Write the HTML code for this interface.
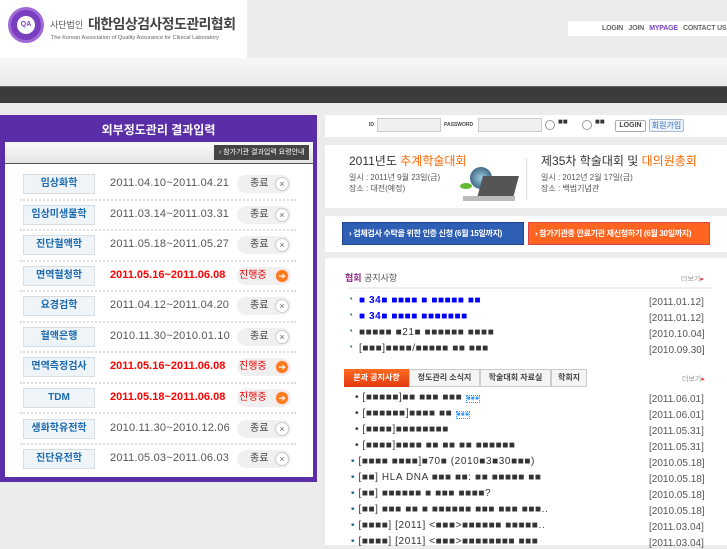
<!DOCTYPE html>
<html><head><meta charset="utf-8"><style>
*{margin:0;padding:0;box-sizing:border-box}
body{width:727px;height:545px;overflow:hidden;background:#ececec;font-family:"Liberation Sans","Noto Sans CJK KR",sans-serif;position:relative;font-size:11px;color:#444}
.abs{position:absolute;white-space:nowrap}
.hdr{left:0;top:0;width:247px;height:58px;background:#fff}
.band{left:0;top:58px;width:727px;height:28px;background:linear-gradient(#f7f7f5,#eaeaea)}
.dark{left:0;top:86px;width:727px;height:17px;background:#3b3b3b;border-top:1px solid #666}
.topnav{left:568px;top:21px;width:159px;height:15px;background:#fff;font-size:7px;font-weight:bold;color:#666;line-height:15px;padding-left:34px;letter-spacing:-.2px}
.panel{left:0;top:115px;width:317px;height:367px;background:#5a2ea6}
.inner{left:5px;top:142px;width:308px;height:335px;background:#fff}
.gbar{left:5px;top:142px;width:308px;height:22px;background:linear-gradient(#fafafa,#e4e4e4);border-bottom:1px solid #555}
.row{left:23px;width:270px;height:22px}
.lab{position:absolute;left:0;top:0;width:72px;height:20px;background:#eef4f8;border:1px solid #d8dde2;color:#1a68b0;font-weight:bold;font-size:10px;text-align:center;line-height:18px}
.dt{position:absolute;left:87px;top:3px;font-size:11px;color:#555;letter-spacing:.2px}
.dt.r{color:#f00;font-weight:bold;letter-spacing:0}
.st{position:absolute;left:214px;top:1px;width:54px;height:18px;border-radius:9px;background:#f0f0f0;font-size:10px;color:#444;line-height:18px;padding-left:13px}
.st i{position:absolute;right:2px;top:2px;width:14px;height:14px;border-radius:7px;background:#fff;border:1px solid #ccc;font-style:normal;font-size:9px;line-height:12px;text-align:center;color:#666}
.st.r{color:#e00;padding-left:2px}
.st.r i{background:#ff7a1a;border-color:#fdd;color:#fff}
.dots{left:20px;width:276px;height:0;border-top:2px dotted #ddd}
.box{background:#fff;left:325px;width:402px}
.n{position:absolute;left:28px;font-size:10px;white-space:nowrap;letter-spacing:.6px}
.d{position:absolute;left:324px;font-size:10px;color:#555}
</style></head><body>
<div class="abs hdr">
 <div class="abs" style="left:8px;top:7px;width:36px;height:36px;border-radius:50%;background:#7a3fbf;border:3px solid #9d6ad6"></div>
 <div class="abs" style="left:17px;top:16px;width:18px;height:18px;border-radius:50%;background:#fff;color:#7a3fbf;font-size:7px;font-weight:bold;text-align:center;line-height:18px">QA</div>
 <div class="abs" style="left:50px;top:18px;font-size:9px;color:#555">사단법인</div>
 <div class="abs" style="left:88px;top:14px;font-size:14px;font-weight:bold;color:#444;letter-spacing:-.6px">대한임상검사정도관리협회</div>
 <div class="abs" style="left:51px;top:35px;font-size:5.6px;color:#666">The Korean Association of Quality Assurance for Clinical Laboratory</div>
</div>
<div class="abs topnav">LOGIN &nbsp; JOIN &nbsp; <span style="color:#7a45c0">MYPAGE</span> &nbsp; CONTACT US</div>
<div class="abs band"></div><div class="abs dark"></div>

<div class="abs panel"></div>
<div class="abs" style="left:0;top:121px;width:317px;text-align:center;color:#fff;font-weight:bold;font-size:12px">외부정도관리 결과입력</div>
<div class="abs inner"></div>
<div class="abs gbar"></div>
<div class="abs" style="left:214px;top:145px;width:95px;height:15px;background:#444;color:#fff;font-size:7px;line-height:15px;padding-left:5px;overflow:hidden">› 참가기관 결과입력 요령안내</div>

<div class="abs row" style="top:174px"><div class="lab">임상화학</div><div class="dt">2011.04.10~2011.04.21</div><div class="st">종료<i>×</i></div></div>
<div class="abs dots" style="top:199px"></div>
<div class="abs row" style="top:205px"><div class="lab">임상미생물학</div><div class="dt">2011.03.14~2011.03.31</div><div class="st">종료<i>×</i></div></div>
<div class="abs dots" style="top:229px"></div>
<div class="abs row" style="top:235px"><div class="lab">진단혈액학</div><div class="dt">2011.05.18~2011.05.27</div><div class="st">종료<i>×</i></div></div>
<div class="abs dots" style="top:260px"></div>
<div class="abs row" style="top:266px"><div class="lab">면역혈청학</div><div class="dt r">2011.05.16~2011.06.08</div><div class="st r">진행중<i>➔</i></div></div>
<div class="abs dots" style="top:290px"></div>
<div class="abs row" style="top:296px"><div class="lab">요경검학</div><div class="dt">2011.04.12~2011.04.20</div><div class="st">종료<i>×</i></div></div>
<div class="abs dots" style="top:321px"></div>
<div class="abs row" style="top:327px"><div class="lab">혈액은행</div><div class="dt">2010.11.30~2010.01.10</div><div class="st">종료<i>×</i></div></div>
<div class="abs dots" style="top:351px"></div>
<div class="abs row" style="top:357px"><div class="lab">면역측정검사</div><div class="dt r">2011.05.16~2011.06.08</div><div class="st r">진행중<i>➔</i></div></div>
<div class="abs dots" style="top:382px"></div>
<div class="abs row" style="top:388px"><div class="lab">TDM</div><div class="dt r">2011.05.18~2011.06.08</div><div class="st r">진행중<i>➔</i></div></div>
<div class="abs dots" style="top:412px"></div>
<div class="abs row" style="top:419px"><div class="lab">생화학유전학</div><div class="dt">2010.11.30~2010.12.06</div><div class="st">종료<i>×</i></div></div>
<div class="abs dots" style="top:443px"></div>
<div class="abs row" style="top:449px"><div class="lab">진단유전학</div><div class="dt">2011.05.03~2011.06.03</div><div class="st">종료<i>×</i></div></div>

<div class="abs box" style="top:115px;height:22px"></div>
<div class="abs" style="left:369px;top:122px;font-size:5px;font-weight:bold">ID</div>
<div class="abs" style="left:377px;top:118px;width:64px;height:14px;background:#f0f0f0;border:1px solid #ccc"></div>
<div class="abs" style="left:444px;top:122px;font-size:5px;font-weight:bold">PASSWORD</div>
<div class="abs" style="left:478px;top:118px;width:64px;height:14px;background:#f0f0f0;border:1px solid #ccc"></div>
<div class="abs" style="left:545px;top:120px;width:10px;height:10px;border-radius:50%;border:1px solid #999;background:#fff"></div>
<div class="abs" style="left:558px;top:117px;font-size:8px;color:#333">■■</div>
<div class="abs" style="left:582px;top:120px;width:10px;height:10px;border-radius:50%;border:1px solid #999;background:#fff"></div>
<div class="abs" style="left:595px;top:117px;font-size:8px;color:#333">■■</div>
<div class="abs" style="left:615px;top:120px;width:31px;height:12px;border:1px solid #aaa;border-radius:2px;font-size:7px;text-align:center;line-height:10px;font-weight:bold">LOGIN</div>
<div class="abs" style="left:649px;top:119px;width:35px;height:13px;border:1px solid #abc;border-radius:2px;font-size:8px;text-align:center;line-height:11px;color:#2a6ac0;background:#eef3fa">회원가입</div>

<div class="abs box" style="top:145px;height:63px"></div>
<div class="abs" style="left:349px;top:152px;font-size:12px;color:#333">2011년도 <span style="color:#f60">추계학술대회</span></div>
<div class="abs" style="left:349px;top:172px;font-size:8px;color:#555;line-height:11px">일시 : 2011년 9월 23일(금)<br>장소 : 대전(예정)</div>
<div class="abs" style="left:470px;top:167px;width:22px;height:22px;border-radius:50%;background:radial-gradient(#9cd,#246)"></div>
<div class="abs" style="left:480px;top:176px;width:36px;height:22px;background:#555;transform:skewX(-15deg)"></div>
<div class="abs" style="left:463px;top:196px;width:52px;height:5px;background:#bbb"></div>
<div class="abs" style="left:460px;top:183px;width:12px;height:6px;background:#6b3;border-radius:50%"></div>
<div class="abs" style="left:526px;top:158px;width:1px;height:42px;background:#ddd"></div>
<div class="abs" style="left:541px;top:152px;font-size:12px;color:#333">제35차 학술대회 및 <span style="color:#f60">대의원총회</span></div>
<div class="abs" style="left:541px;top:172px;font-size:8px;color:#555;line-height:11px">일시 : 2012년 2월 17일(금)<br>장소 : 백범기념관</div>

<div class="abs box" style="top:216px;height:36px"></div>
<div class="abs" style="left:342px;top:222px;width:182px;height:23px;background:#2e5fb5;border:1px solid #1f4490;color:#fff;font-size:8px;font-weight:bold;line-height:21px;padding-left:6px;overflow:hidden;letter-spacing:-.3px">› 검체검사 수탁을 위한 인증 신청 (6월 15일까지)</div>
<div class="abs" style="left:528px;top:222px;width:182px;height:23px;background:#ff6420;border:1px solid #d44;color:#fff;font-size:8px;font-weight:bold;line-height:21px;padding-left:6px;overflow:hidden;letter-spacing:-.3px">› 참가기관중 만료기관 재신청하기 (6월 30일까지)</div>

<div class="abs box" style="top:258px;height:287px">
 <div class="abs" style="left:20px;top:13px;font-size:9px;color:#555"><b style="color:#8a2a8a">협회</b> 공지사항</div>
 <div class="abs" style="left:356px;top:16px;font-size:7px;color:#999">더보기<span style="color:#e33">▸</span></div>
 <div class="abs" style="left:24px;top:29px;width:363px;height:2px;background:#eee"></div>
 <div class="abs" style="left:25px;top:38px;font-size:7px;color:#26a">•</div><div class="n" style="top:37px;left:34px;color:#00f;font-weight:bold">■ 34■ ■■■■ ■ ■■■■■ ■■</div><div class="d" style="top:39px">[2011.01.12]</div>
 <div class="abs" style="left:25px;top:54px;font-size:7px;color:#26a">•</div><div class="n" style="top:53px;left:34px;color:#00f;font-weight:bold">■ 34■ ■■■■ ■■■■■■■</div><div class="d" style="top:55px">[2011.01.12]</div>
 <div class="abs" style="left:25px;top:70px;font-size:7px;color:#26a">•</div><div class="n" style="top:69px;left:34px;color:#333">■■■■■ ■21■ ■■■■■■ ■■■■</div><div class="d" style="top:71px">[2010.10.04]</div>
 <div class="abs" style="left:25px;top:86px;font-size:7px;color:#26a">•</div><div class="n" style="top:85px;left:34px;color:#333">[■■■]■■■■/■■■■■ ■■ ■■■</div><div class="d" style="top:87px">[2010.09.30]</div>
 <div class="abs" style="left:19px;top:111px;width:65px;height:18px;background:linear-gradient(#ff6a20,#e23a10);color:#fff;font-size:8px;font-weight:bold;text-align:center;line-height:18px">분과 공지사항</div>
 <div class="abs" style="left:84px;top:111px;width:71px;height:18px;background:#f4f4f4;border:1px solid #ccc;font-size:8px;text-align:center;line-height:16px;font-weight:bold">정도관리 소식지</div>
 <div class="abs" style="left:155px;top:111px;width:71px;height:18px;background:#f4f4f4;border:1px solid #ccc;font-size:8px;text-align:center;line-height:16px;font-weight:bold">학술대회 자료실</div>
 <div class="abs" style="left:226px;top:111px;width:36px;height:18px;background:#f4f4f4;border:1px solid #ccc;font-size:8px;text-align:center;line-height:16px;font-weight:bold">학회지</div>
 <div class="abs" style="left:357px;top:116px;font-size:7px;color:#999">더보기<span style="color:#e33">▸</span></div>
 <div class="n" style="top:134px;left:30px;color:#333">• [■■■■■]■■ ■■■ ■■■ <span style="font-size:6px;color:#39f;border:1px dotted #39f">■■■</span></div><div class="d" style="top:136px">[2011.06.01]</div>
 <div class="n" style="top:150px;left:30px;color:#333">• [■■■■■■]■■■■ ■■ <span style="font-size:6px;color:#39f;border:1px dotted #39f">■■■</span></div><div class="d" style="top:152px">[2011.06.01]</div>
 <div class="n" style="top:166px;left:30px;color:#333">• [■■■■]■■■■■■■■</div><div class="d" style="top:168px">[2011.05.31]</div>
 <div class="n" style="top:182px;left:30px;color:#333">• [■■■■]■■■■ ■■ ■■ ■■ ■■■■■■</div><div class="d" style="top:184px">[2011.05.31]</div>
 <div class="n" style="top:198px;left:26px;color:#333"><span style="color:#26a">•</span> [■■■■ ■■■■]■70■ (2010■3■30■■■)</div><div class="d" style="top:200px">[2010.05.18]</div>
 <div class="n" style="top:214px;left:26px;color:#333"><span style="color:#26a">•</span> [■■] HLA DNA ■■■ ■■: ■■ ■■■■■ ■■</div><div class="d" style="top:216px">[2010.05.18]</div>
 <div class="n" style="top:230px;left:26px;color:#333"><span style="color:#26a">•</span> [■■] ■■■■■■ ■ ■■■ ■■■■?</div><div class="d" style="top:232px">[2010.05.18]</div>
 <div class="n" style="top:246px;left:26px;color:#333"><span style="color:#26a">•</span> [■■] ■■■ ■■ ■ ■■■■■■ ■■■ ■■■ ■■■..</div><div class="d" style="top:248px">[2010.05.18]</div>
 <div class="n" style="top:262px;left:26px;color:#333"><span style="color:#26a">•</span> [■■■■] [2011] &lt;■■■&gt;■■■■■■ ■■■■■..</div><div class="d" style="top:264px">[2011.03.04]</div>
 <div class="n" style="top:278px;left:26px;color:#333"><span style="color:#26a">•</span> [■■■■] [2011] &lt;■■■&gt;■■■■■■■■ ■■■</div><div class="d" style="top:280px">[2011.03.04]</div>
</div>
</body></html>
